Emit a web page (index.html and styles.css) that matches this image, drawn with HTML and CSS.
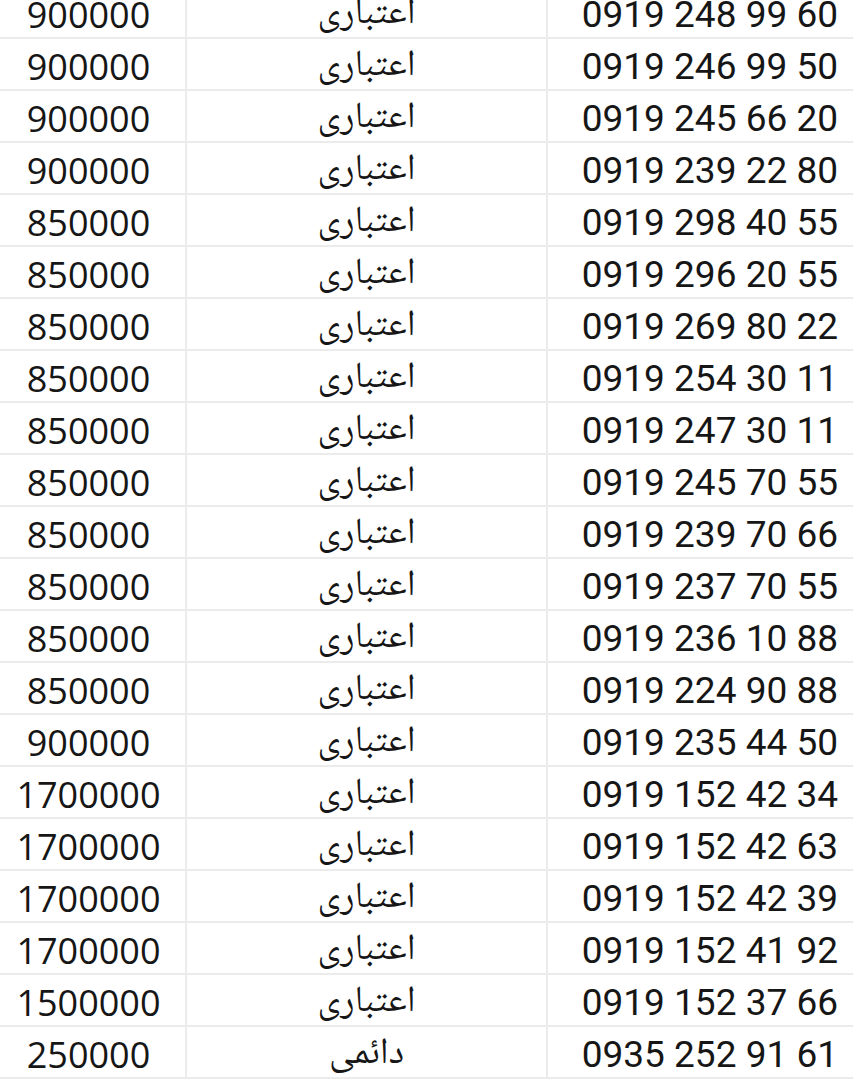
FILE: index.html
```html
<!DOCTYPE html>
<html lang="fa">
<head>
<meta charset="utf-8">
<link rel="stylesheet" href="styles.css">
</head>
<body>
<div class="sheet">
  <div class="row"><div class="price">900000</div><div class="type">اعتباری</div><div class="phone">0919 248 99 60</div></div>
  <div class="row"><div class="price">900000</div><div class="type">اعتباری</div><div class="phone">0919 246 99 50</div></div>
  <div class="row"><div class="price">900000</div><div class="type">اعتباری</div><div class="phone">0919 245 66 20</div></div>
  <div class="row"><div class="price">900000</div><div class="type">اعتباری</div><div class="phone">0919 239 22 80</div></div>
  <div class="row"><div class="price">850000</div><div class="type">اعتباری</div><div class="phone">0919 298 40 55</div></div>
  <div class="row"><div class="price">850000</div><div class="type">اعتباری</div><div class="phone">0919 296 20 55</div></div>
  <div class="row"><div class="price">850000</div><div class="type">اعتباری</div><div class="phone">0919 269 80 22</div></div>
  <div class="row"><div class="price">850000</div><div class="type">اعتباری</div><div class="phone">0919 254 30 11</div></div>
  <div class="row"><div class="price">850000</div><div class="type">اعتباری</div><div class="phone">0919 247 30 11</div></div>
  <div class="row"><div class="price">850000</div><div class="type">اعتباری</div><div class="phone">0919 245 70 55</div></div>
  <div class="row"><div class="price">850000</div><div class="type">اعتباری</div><div class="phone">0919 239 70 66</div></div>
  <div class="row"><div class="price">850000</div><div class="type">اعتباری</div><div class="phone">0919 237 70 55</div></div>
  <div class="row"><div class="price">850000</div><div class="type">اعتباری</div><div class="phone">0919 236 10 88</div></div>
  <div class="row"><div class="price">850000</div><div class="type">اعتباری</div><div class="phone">0919 224 90 88</div></div>
  <div class="row"><div class="price">900000</div><div class="type">اعتباری</div><div class="phone">0919 235 44 50</div></div>
  <div class="row"><div class="price">1700000</div><div class="type">اعتباری</div><div class="phone">0919 152 42 34</div></div>
  <div class="row"><div class="price">1700000</div><div class="type">اعتباری</div><div class="phone">0919 152 42 63</div></div>
  <div class="row"><div class="price">1700000</div><div class="type">اعتباری</div><div class="phone">0919 152 42 39</div></div>
  <div class="row"><div class="price">1700000</div><div class="type">اعتباری</div><div class="phone">0919 152 41 92</div></div>
  <div class="row"><div class="price">1500000</div><div class="type">اعتباری</div><div class="phone">0919 152 37 66</div></div>
  <div class="row"><div class="price">250000</div><div class="type">دائمی</div><div class="phone">0935 252 91 61</div></div>
</div>
</body>
</html>
```
FILE: styles.css
```css
html, body {
  margin: 0;
  padding: 0;
  background: #ffffff;
  overflow: hidden;
}
.sheet {
  margin-top: -13px;
  width: 853px;
}
.row {
  display: grid;
  grid-template-columns: 187px 361px 1fr;
  grid-template-rows: 50px;
  height: 52px;
  box-sizing: border-box;
  border-bottom: 2px solid #ebebeb;
  color: #161616;
}
.row > div {
  display: flex;
  align-items: center;
  box-sizing: border-box;
  height: 50px;
  line-height: 1;
  padding-top: 5px;
  white-space: nowrap;
}
.price {
  justify-content: center;
  padding-right: 8px;
  font-family: "Open Sans", sans-serif;
  font-size: 36px;
  border-right: 2px solid #ebebeb;
}
.type {
  justify-content: center;
  padding-top: 3px;
  font-family: "Noto Naskh Arabic", "Noto Sans Arabic", "DejaVu Sans", sans-serif;
  font-size: 37px;
  border-right: 2px solid #ebebeb;
}
.phone {
  justify-content: flex-end;
  padding-right: 15px;
  font-family: Roboto, sans-serif;
  font-size: 37px;
}
```
